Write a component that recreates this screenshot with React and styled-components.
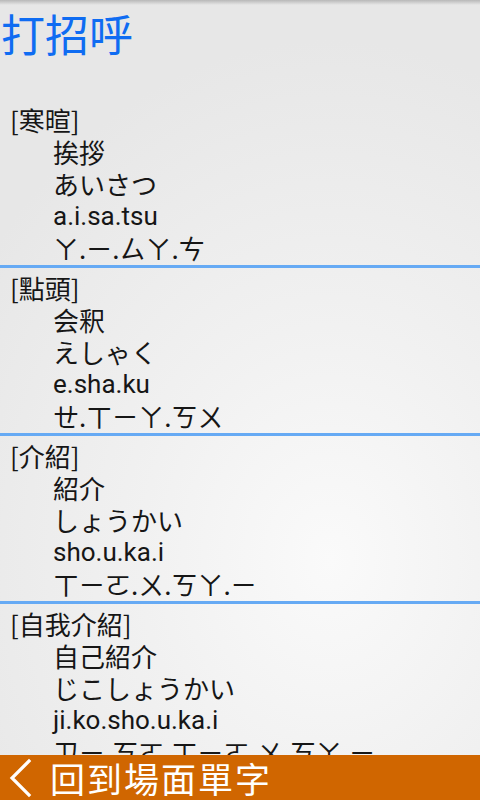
import React from "react";
import styled, { createGlobalStyle } from "styled-components";

const GlobalStyle = createGlobalStyle`
  html, body {
    margin: 0;
    padding: 0;
  }
  body {
    font-family: Roboto, "Noto Sans CJK TC", sans-serif;
  }
`;

const Screen = styled.div`
  position: relative;
  width: 480px;
  height: 800px;
  display: flex;
  flex-direction: column;
  overflow: hidden;
  background: radial-gradient(
    ellipse 420px 520px at 330px 560px,
    #fafafa 0%,
    #f1f1f1 45%,
    #e7e7e7 100%
  );

  &::before {
    content: "";
    position: absolute;
    left: 0;
    right: 0;
    top: 0;
    height: 5px;
    background: linear-gradient(#b8b8b8, rgba(200, 200, 200, 0));
  }
`;

const Title = styled.h1`
  margin: 0;
  height: 66px;
  line-height: 66px;
  padding-left: 1px;
  font-size: 44px;
  font-weight: normal;
  color: #0f6cf2;
  font-family: "Noto Sans CJK TC", sans-serif;
`;

const List = styled.div`
  flex: 1;
  overflow: hidden;
  padding-top: 34px;
`;

const Section = styled.div`
  padding: 4px 0 1px;
`;

const Line = styled.div`
  height: 32px;
  line-height: 32px;
  font-size: 26px;
  color: #161616;
  white-space: nowrap;
  padding-left: ${(p) => (p.$head ? "10px" : "53px")};
  font-family: ${(p) =>
    p.$latin
      ? "Roboto, sans-serif"
      : '"Noto Sans CJK TC", sans-serif'};
`;

const Divider = styled.div`
  height: 3px;
  background: #66aaf4;
`;

const BottomBar = styled.div`
  height: 45px;
  flex-shrink: 0;
  background: #d06600;
  display: flex;
  align-items: center;
  gap: 18px;
  padding-left: 8px;
  color: #ffffff;
`;

const BackLabel = styled.span`
  font-size: 35px;
  line-height: 45px;
  letter-spacing: 2px;
  font-family: "Noto Sans CJK TC", sans-serif;
`;

const Chevron = () => (
  <svg width="24" height="40" viewBox="0 0 24 40">
    <polyline
      points="21,3 4,20 21,37"
      fill="none"
      stroke="#ffffff"
      strokeWidth="3.2"
      strokeLinecap="square"
    />
  </svg>
);

const entries = [
  ["[寒暄]", "挨拶", "あいさつ", "a.i.sa.tsu", "ㄚ.ㄧ.ㄙㄚ.ㄘ"],
  ["[點頭]", "会釈", "えしゃく", "e.sha.ku", "ㄝ.ㄒㄧㄚ.ㄎㄨ"],
  ["[介紹]", "紹介", "しょうかい", "sho.u.ka.i", "ㄒㄧㄛ.ㄨ.ㄎㄚ.ㄧ"],
  [
    "[自我介紹]",
    "自己紹介",
    "じこしょうかい",
    "ji.ko.sho.u.ka.i",
    "ㄗㄧ.ㄎㄛ.ㄒㄧㄛ.ㄨ.ㄎㄚ.ㄧ",
  ],
];

export default function App() {
  return (
    <>
      <GlobalStyle />
      <Screen>
        <Title>打招呼</Title>
        <List>
          {entries.map(([head, kanji, kana, romaji, zhuyin], i) => (
            <React.Fragment key={head}>
              {i > 0 && <Divider />}
              <Section>
                <Line $head>{head}</Line>
                <Line>{kanji}</Line>
                <Line>{kana}</Line>
                <Line $latin>{romaji}</Line>
                <Line>{zhuyin}</Line>
              </Section>
            </React.Fragment>
          ))}
        </List>
        <BottomBar>
          <Chevron />
          <BackLabel>回到場面單字</BackLabel>
        </BottomBar>
      </Screen>
    </>
  );
}
